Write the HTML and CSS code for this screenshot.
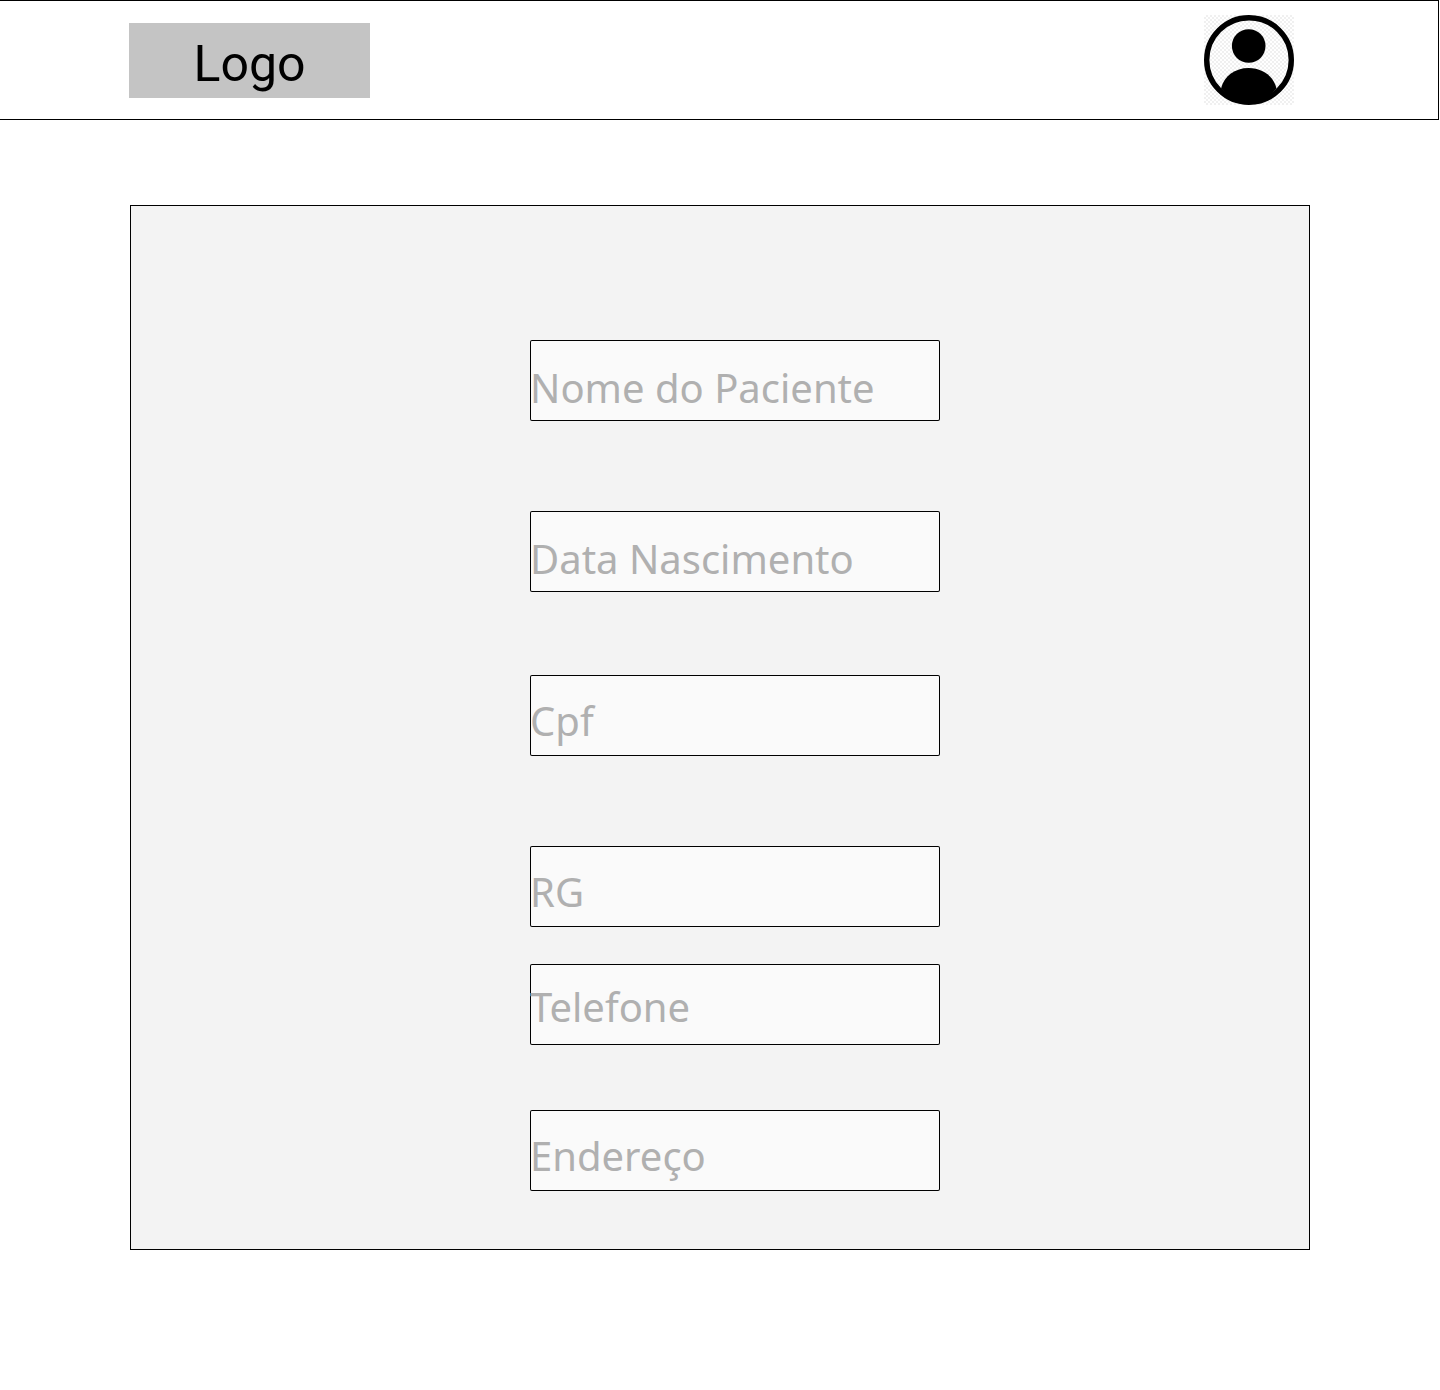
FILE: index.html
```html
<!DOCTYPE html>
<html lang="pt-BR">
<head>
<meta charset="utf-8">
<meta name="viewport" content="width=device-width, initial-scale=1">
<title>Cadastro de Paciente</title>
<link rel="stylesheet" href="styles.css">
</head>
<body>
<header class="topbar">
  <a class="logo" href="#">Logo</a>
  <button class="avatar" type="button" aria-label="Perfil">
    <svg class="avatar-icon" viewBox="0 0 90 90" aria-hidden="true">
      <circle cx="45" cy="45" r="42.3" fill="none" stroke="#000" stroke-width="5.4"/>
      <circle cx="44.7" cy="31" r="16.8"/>
      <path d="M17 73.500C20 61 31 53 44.700 53S69.500 61 72.500 73.500A40 40 0 0 1 45 87A40 40 0 0 1 17 73.500Z"/>
    </svg>
  </button>
</header>
<main class="page">
  <form class="panel">
    <input class="field field-low" type="text" name="nome" placeholder="Nome do Paciente" aria-label="Nome do Paciente">
    <input class="field field-low gap-xl" type="text" name="nascimento" placeholder="Data Nascimento" aria-label="Data Nascimento">
    <input class="field gap-lg" type="text" name="cpf" placeholder="Cpf" aria-label="Cpf">
    <input class="field gap-xl" type="text" name="rg" placeholder="RG" aria-label="RG">
    <input class="field field-high gap-sm" type="text" name="telefone" placeholder="Telefone" aria-label="Telefone">
    <input class="field gap-md" type="text" name="endereco" placeholder="Endereço" aria-label="Endereço">
  </form>
</main>
</body>
</html>
```
FILE: styles.css
```css
* {
  box-sizing: border-box;
}

body {
  margin: 0;
  background: #fff;
  color: #000;
  font-family: "Noto Sans", sans-serif;
}

.topbar {
  display: flex;
  align-items: center;
  justify-content: space-between;
  min-height: 120px;
  margin-right: 1px;
  padding: 0 144px 0 129px;
  border: 1px solid #000;
  border-left: 0;
}

.logo {
  width: 241px;
  padding: 11px 0 4px;
  background: #c4c4c4;
  color: #000;
  font-family: Roboto, sans-serif;
  font-size: 50px;
  line-height: 60px;
  text-align: center;
  text-decoration: none;
}

.avatar {
  width: 90px;
  height: 90px;
  padding: 0;
  border: 0;
  background: repeating-conic-gradient(#f0f0f0 0 25%, #fff 0 50%) 0 0 / 4px 4px;
  cursor: pointer;
}

.avatar-icon {
  display: block;
  width: 100%;
  height: 100%;
}

.page {
  padding: 85px 130px 140px;
}

.panel {
  display: flex;
  flex-direction: column;
  align-items: center;
  padding: 134px 0 58px 30px;
  border: 1px solid #000;
  background: #f3f3f3;
}

.field {
  width: 410px;
  max-width: 100%;
  height: 81px;
  padding: 10px 0 0;
  border: 0;
  border-radius: 2px;
  outline: 0;
  background: #fafafa;
  box-shadow: inset 0 0 0 1px #000;
  color: #000;
  font-family: inherit;
  font-size: 40px;
}

.field::placeholder {
  color: #b0b0b0;
  opacity: 1;
}

.field-low {
  padding-top: 14px;
}

.field-high {
  padding-top: 4px;
}

.gap-sm {
  margin-top: 37px;
}

.gap-md {
  margin-top: 65px;
}

.gap-lg {
  margin-top: 83px;
}

.gap-xl {
  margin-top: 90px;
}
```
